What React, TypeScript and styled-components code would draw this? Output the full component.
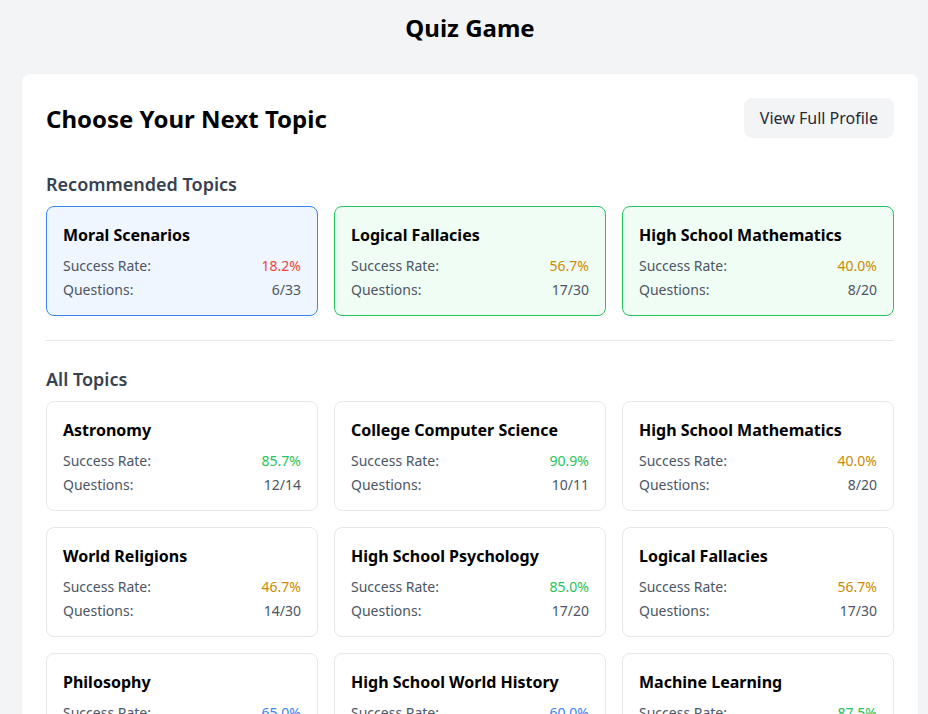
import React from "react";
import styled, { createGlobalStyle } from "styled-components";

const GlobalStyle = createGlobalStyle`
  * { box-sizing: border-box; }
  html, body { margin: 0; padding: 0; }
  body {
    background: #f3f4f6;
    font-family: "Noto Sans", "Open Sans", sans-serif;
    color: #111827;
  }
`;

const Page = styled.div`
  padding: 12px 10px 24px 22px;
`;

const PageTitle = styled.h1`
  margin: 0 0 30px;
  text-align: center;
  font-size: 24px;
  line-height: 32px;
  font-weight: 700;
  color: #000;
`;

const Panel = styled.main`
  background: #fff;
  border-radius: 8px;
  padding: 24px;
  box-shadow: 0 1px 2px rgba(0, 0, 0, 0.05);
`;

const Header = styled.div`
  display: flex;
  align-items: center;
  justify-content: space-between;
  margin-bottom: 32px;
`;

const Heading = styled.h2`
  margin: 0;
  padding-top: 1px;
  font-size: 24px;
  line-height: 32px;
  font-weight: 700;
  color: #000;
`;

const ProfileButton = styled.button`
  height: 40px;
  padding: 0 16px;
  border: none;
  border-radius: 8px;
  background: #f3f4f6;
  color: #1f2937;
  font-family: inherit;
  font-size: 16px;
  cursor: pointer;
`;

const SectionTitle = styled.h3`
  margin: 0 0 8px;
  font-size: 18px;
  line-height: 28px;
  font-weight: 600;
  color: #374151;
`;

const Grid = styled.div`
  display: grid;
  grid-template-columns: repeat(3, 1fr);
  gap: 16px;
`;

const Divider = styled.hr`
  border: none;
  border-top: 1px solid #e5e7eb;
  margin: 24px 0;
`;

type Variant = "plain" | "blue" | "green";

const Card = styled.div<{ $variant: Variant }>`
  border-radius: 8px;
  padding: 16px 16px 15px;
  border: 1px solid
    ${(p) => (p.$variant === "blue" ? "#3b82f6" : p.$variant === "green" ? "#22c55e" : "#e5e7eb")};
  background: ${(p) => (p.$variant === "blue" ? "#eff6ff" : p.$variant === "green" ? "#f0fdf4" : "#fff")};
`;

const CardTitle = styled.div`
  font-size: 16px;
  line-height: 24px;
  font-weight: 700;
  color: #000;
  margin-bottom: 9px;
`;

const Stats = styled.div`
  display: flex;
  flex-direction: column;
  gap: 4px;
`;

const StatRow = styled.div`
  display: flex;
  justify-content: space-between;
  font-size: 14px;
  line-height: 20px;
  color: #4b5563;
`;

const Rate = styled.span<{ $color: string }>`
  color: ${(p) => p.$color};
`;

type Topic = { name: string; rate: number; done: number; total: number };

const rateColor = (r: number) => {
  if (r >= 80) return "#22c55e";
  if (r >= 60) return "#3b82f6";
  if (r >= 40) return "#ca8a04";
  return "#ef4444";
};

const recommended: Topic[] = [
  { name: "Moral Scenarios", rate: 18.2, done: 6, total: 33 },
  { name: "Logical Fallacies", rate: 56.7, done: 17, total: 30 },
  { name: "High School Mathematics", rate: 40.0, done: 8, total: 20 },
];

const all: Topic[] = [
  { name: "Astronomy", rate: 85.7, done: 12, total: 14 },
  { name: "College Computer Science", rate: 90.9, done: 10, total: 11 },
  { name: "High School Mathematics", rate: 40.0, done: 8, total: 20 },
  { name: "World Religions", rate: 46.7, done: 14, total: 30 },
  { name: "High School Psychology", rate: 85.0, done: 17, total: 20 },
  { name: "Logical Fallacies", rate: 56.7, done: 17, total: 30 },
  { name: "Philosophy", rate: 65.0, done: 13, total: 20 },
  { name: "High School World History", rate: 60.0, done: 12, total: 20 },
  { name: "Machine Learning", rate: 87.5, done: 7, total: 8 },
];

const TopicCard = ({ topic, variant }: { topic: Topic; variant: Variant }) => (
  <Card $variant={variant}>
    <CardTitle>{topic.name}</CardTitle>
    <Stats>
      <StatRow>
        <span>Success Rate:</span>
        <Rate $color={rateColor(topic.rate)}>{topic.rate.toFixed(1)}%</Rate>
      </StatRow>
      <StatRow>
        <span>Questions:</span>
        <span>
          {topic.done}/{topic.total}
        </span>
      </StatRow>
    </Stats>
  </Card>
);

export default function App() {
  return (
    <>
      <GlobalStyle />
      <Page>
        <PageTitle>Quiz Game</PageTitle>
        <Panel>
          <Header>
            <Heading>Choose Your Next Topic</Heading>
            <ProfileButton>View Full Profile</ProfileButton>
          </Header>
          <SectionTitle>Recommended Topics</SectionTitle>
          <Grid>
            {recommended.map((t, i) => (
              <TopicCard key={t.name} topic={t} variant={i === 0 ? "blue" : "green"} />
            ))}
          </Grid>
          <Divider />
          <SectionTitle>All Topics</SectionTitle>
          <Grid>
            {all.map((t) => (
              <TopicCard key={t.name} topic={t} variant="plain" />
            ))}
          </Grid>
        </Panel>
      </Page>
    </>
  );
}
